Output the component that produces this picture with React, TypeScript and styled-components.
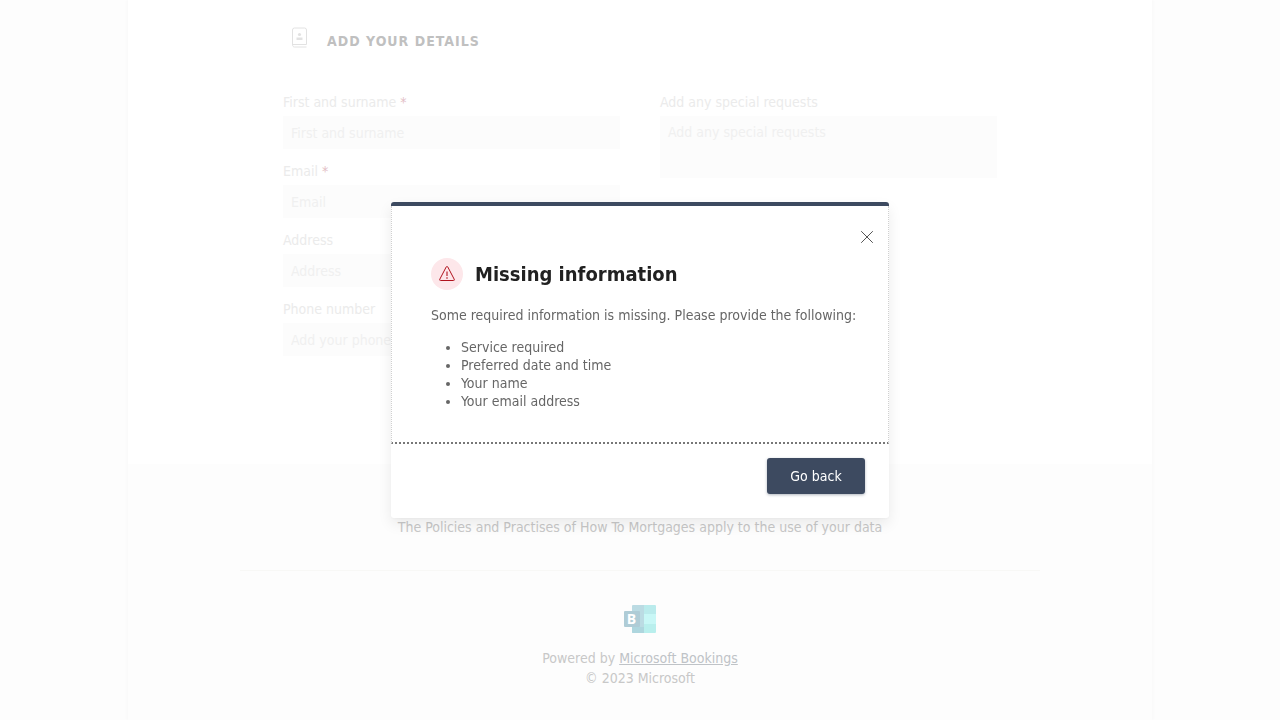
import React from "react";
import styled, { createGlobalStyle } from "styled-components";

const GlobalStyle = createGlobalStyle`
  *, *::before, *::after { box-sizing: border-box; }
  body {
    margin: 0;
    background: #fdfdfd;
    color: #c8c8c8;
    font-family: "DejaVu Sans Condensed", "Noto Sans", sans-serif;
    font-size: 14px;
    line-height: 20px;
  }
  input, textarea, button { font: inherit; }
`;

const Page = styled.div`
  display: flex;
  flex-direction: column;
  width: 80%;
  min-height: 100vh;
  margin: 0 auto;
  background: #fff;
  box-shadow: 0 0 4px #f4f4f4;
`;

const Details = styled.form`
  width: 100%;
  max-width: 714px;
  margin: 0 auto;
  padding: 24px 0 108px;
`;

const DetailsHeader = styled.header`
  display: flex;
  align-items: center;
  gap: 16px;
  padding-left: 4px;
  margin-bottom: 40px;
`;

const DetailsTitle = styled.h2`
  margin: 6px 0 0;
  font-size: 14px;
  line-height: 22px;
  font-weight: 700;
  letter-spacing: 1px;
  color: #c0c0c0;
`;

const Columns = styled.div`
  display: grid;
  grid-template-columns: 1fr 1fr;
  gap: 40px;
`;

const Column = styled.div`
  display: flex;
  flex-direction: column;
  gap: 12px;
`;

const Field = styled.div`
  display: flex;
  flex-direction: column;
`;

const Label = styled.label`
  line-height: 20px;
  margin-bottom: 4px;
  color: #ebebeb;
`;

const Star = styled.span`
  color: #e3c0c6;
`;

const TextInput = styled.input`
  width: 100%;
  height: 33px;
  padding: 0 8px;
  border: 0;
  background: #fcfcfc;
  color: #ccc;
  &::placeholder { color: #f0f0f0; opacity: 1; }
`;

const TextArea = styled.textarea`
  height: 62px;
  padding: 6px 8px;
  border: 0;
  resize: none;
  background: #fcfcfc;
  color: #ccc;
  &::placeholder { color: #f0f0f0; opacity: 1; }
`;

const Footer = styled.footer`
  flex: 1;
  display: flex;
  flex-direction: column;
  align-items: center;
  padding: 53px 24px 32px;
  background: #fdfdfd;
  color: #c8c8c8;
  text-align: center;
`;

const Policy = styled.p`
  margin: 0;
`;

const Divider = styled.hr`
  width: 100%;
  max-width: 800px;
  margin: 33px 0 34px;
  border: 0;
  border-top: 1px solid #f8f8f6;
`;

const Credits = styled.p`
  margin: 15px 0 0;
`;

const CreditLink = styled.a`
  color: #bfc3c7;
  text-decoration: underline;
`;

const Overlay = styled.div`
  position: fixed;
  inset: 0;
  display: flex;
  align-items: center;
  justify-content: center;
`;

const Dialog = styled.section`
  width: 498px;
  max-width: 100%;
  border-top: 4px solid #3d4a60;
  border-radius: 3px;
  background: #fff;
  color: #666;
  box-shadow: 0 6px 14px rgba(0, 0, 0, 0.08), 0 1px 3px rgba(0, 0, 0, 0.03);
`;

const DialogBody = styled.div`
  display: flex;
  flex-direction: column;
  padding: 20px 11px 32px 39px;
  border: 1px dotted #d0d0d0;
  border-top: 0;
  border-bottom: 2px dotted #777;
`;

const CloseButton = styled.button`
  align-self: flex-end;
  display: grid;
  place-items: center;
  width: 20px;
  height: 22px;
  padding: 0;
  border: 0;
  background: none;
  color: #555;
`;

const TitleRow = styled.div`
  display: flex;
  align-items: center;
  gap: 12px;
  margin-top: 10px;
`;

const WarningBadge = styled.span`
  display: grid;
  place-items: center;
  width: 32px;
  height: 32px;
  border-radius: 50%;
  background: #fde7ea;
  color: #b1121d;
`;

const DialogTitle = styled.h1`
  margin: 0;
  font-size: 20px;
  line-height: 28px;
  font-weight: 700;
  color: #212121;
`;

const Message = styled.p`
  margin: 15px 0 13px;
`;

const MissingList = styled.ul`
  margin: 0;
  padding-left: 30px;
  line-height: 18px;
`;

const DialogFooter = styled.div`
  display: flex;
  justify-content: flex-end;
  padding: 14px 24px 24px;
`;

const PrimaryButton = styled.button`
  width: 98px;
  height: 36px;
  padding: 0;
  border: 0;
  border-radius: 3px;
  background: #3d4a60;
  color: #fff;
  box-shadow: 0 1px 3px rgba(61, 74, 96, 0.4);
`;

const leftFields = [
  { id: "name", label: "First and surname", hint: "First and surname", required: true },
  { id: "email", label: "Email", hint: "Email", required: true },
  { id: "address", label: "Address", hint: "Address", required: false },
  { id: "phone", label: "Phone number", hint: "Add your phone number", required: false },
];

const missing = ["Service required", "Preferred date and time", "Your name", "Your email address"];

const ContactIcon = () => (
  <svg width="24" height="26" viewBox="0 0 24 26" fill="none" stroke="#e2e2e2" aria-hidden="true">
    <path d="M5.500 20V5a2 2 0 0 1 2-2h10a2 2 0 0 1 2 2v14.500H5.500c0 1.600.8 2.500 2 2.500h12" />
    <circle cx="12.500" cy="9.500" r="1.600" fill="#e2e2e2" stroke="none" />
    <path d="M9.500 12.500h6v2.500h-6z" fill="#e2e2e2" stroke="none" />
  </svg>
);

const WarningIcon = () => (
  <svg width="18" height="18" viewBox="0 0 18 18" fill="none" stroke="currentColor" aria-hidden="true">
    <path d="M8.200 2 1.800 14.200a.9.9 0 0 0 .8 1.300h12.800a.9.9 0 0 0 .8-1.300L9.800 2a.9.9 0 0 0-1.600 0z" />
    <path d="M9 6.500v4.500" strokeWidth="1.100" />
    <circle cx="9" cy="13" r=".8" fill="currentColor" stroke="none" />
  </svg>
);

const CloseIcon = () => (
  <svg width="12" height="12" viewBox="0 0 12 12" stroke="currentColor" aria-hidden="true">
    <path d="M.2.2l11.600 11.600M11.800.2L.2 11.800" />
  </svg>
);

const BookingsLogo = () => (
  <svg width="32" height="28" viewBox="0 0 32 28" aria-hidden="true">
    <path d="M8 1a1 1 0 0 1 1-1h11v28H9a1 1 0 0 1-1-1z" fill="#bbdbe3" />
    <path d="M8 22h12v6H9a1 1 0 0 1-1-1z" fill="#aed6de" />
    <path d="M20 0h11a1 1 0 0 1 1 1v8H20z" fill="#baebec" />
    <path d="M20 9h12v10H20z" fill="#c8f7f6" />
    <path d="M20 19h12v8a1 1 0 0 1-1 1H20z" fill="#b9efed" />
    <rect y="6" width="16" height="16" rx="1" fill="#afccd6" />
    <text x="7.500" y="19" textAnchor="middle" fontFamily="Open Sans, sans-serif" fontSize="14" fontWeight="700" fill="#fff">B</text>
  </svg>
);

export default function App() {
  return (
    <>
      <GlobalStyle />
      <Page>
        <Details>
          <DetailsHeader>
            <ContactIcon />
            <DetailsTitle>ADD YOUR DETAILS</DetailsTitle>
          </DetailsHeader>
          <Columns>
            <Column>
              {leftFields.map((f) => (
                <Field key={f.id}>
                  <Label htmlFor={f.id}>
                    {f.label} {f.required && <Star>*</Star>}
                  </Label>
                  <TextInput id={f.id} placeholder={f.hint} />
                </Field>
              ))}
            </Column>
            <Column>
              <Field>
                <Label htmlFor="requests">Add any special requests</Label>
                <TextArea id="requests" placeholder="Add any special requests" />
              </Field>
            </Column>
          </Columns>
        </Details>
        <Footer>
          <Policy>The Policies and Practises of How To Mortgages apply to the use of your data</Policy>
          <Divider />
          <BookingsLogo />
          <Credits>
            Powered by <CreditLink href="#bookings">Microsoft Bookings</CreditLink>
            <br />© 2023 Microsoft
          </Credits>
        </Footer>
      </Page>
      <Overlay>
        <Dialog role="dialog" aria-modal="true" aria-labelledby="dialog-title">
          <DialogBody>
            <CloseButton type="button" aria-label="Close">
              <CloseIcon />
            </CloseButton>
            <TitleRow>
              <WarningBadge>
                <WarningIcon />
              </WarningBadge>
              <DialogTitle id="dialog-title">Missing information</DialogTitle>
            </TitleRow>
            <Message>Some required information is missing. Please provide the following:</Message>
            <MissingList>
              {missing.map((m) => (
                <li key={m}>{m}</li>
              ))}
            </MissingList>
          </DialogBody>
          <DialogFooter>
            <PrimaryButton type="button">Go back</PrimaryButton>
          </DialogFooter>
        </Dialog>
      </Overlay>
    </>
  );
}
